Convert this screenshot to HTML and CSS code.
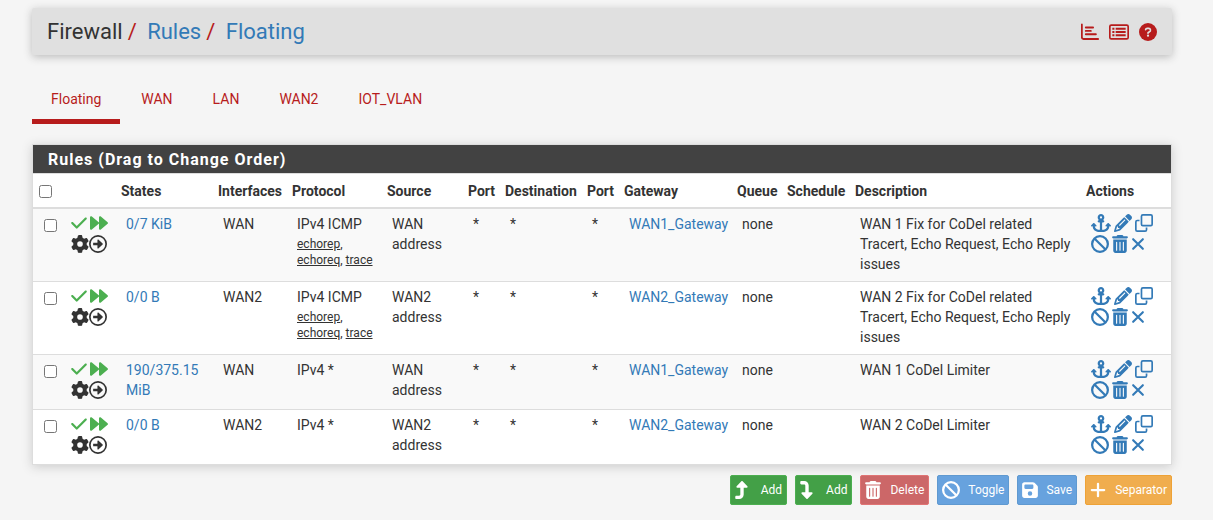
FILE: index.html
```
<!DOCTYPE html>
<html lang="en">
<head>
  <meta charset="utf-8">
  <title>Firewall: Rules: Floating</title>
  <link rel="stylesheet" href="styles.css">
</head>
<body>
  <!-- Icon set -->
  <svg class="icon-set" aria-hidden="true">
    <symbol id="check" viewBox="0 0 448 512"><path d="M438.6 105.4c12.5 12.5 12.5 32.8 0 45.3l-256 256c-12.5 12.5-32.8 12.5-45.3 0l-128-128c-12.5-12.5-12.5-32.8 0-45.3s32.8-12.5 45.3 0L160 338.7 393.4 105.4c12.5-12.5 32.8-12.5 45.3 0z"/></symbol>
    <symbol id="forward" viewBox="0 0 512 512"><path d="M52.5 440.6c-9.5 7.9-22.8 9.7-34.1 4.4S0 428.4 0 416V96C0 83.6 7.2 72.3 18.4 67s24.5-3.6 34.1 4.4L256 241V96c0-12.4 7.2-23.7 18.4-29s24.5-3.6 34.1 4.4l192 160c7.3 6.1 11.5 15.1 11.5 24.6s-4.2 18.5-11.5 24.6l-192 160c-9.5 7.9-22.8 9.7-34.1 4.4s-18.4-16.6-18.4-29V271L52.5 440.6z"/></symbol>
    <symbol id="gear" viewBox="0 0 512 512"><path d="M495.9 166.6c3.2 8.7 .5 18.4-6.4 24.6l-43.3 39.4c1.1 8.3 1.7 16.8 1.7 25.4s-.6 17.1-1.7 25.4l43.3 39.4c6.9 6.2 9.6 15.9 6.4 24.6c-4.4 11.9-9.7 23.3-15.8 34.3l-4.7 8.1c-6.6 11-14 21.4-22.1 31.2c-5.9 7.2-15.7 9.6-24.5 6.8l-55.7-17.7c-13.4 10.3-28.2 18.9-44 25.4l-12.5 57.1c-2 9.1-9 16.3-18.2 17.8c-13.8 2.3-28 3.5-42.5 3.5s-28.7-1.2-42.5-3.5c-9.2-1.5-16.2-8.7-18.2-17.8l-12.5-57.1c-15.8-6.5-30.6-15.1-44-25.4L83.1 425.9c-8.8 2.8-18.6 .3-24.5-6.8c-8.1-9.8-15.5-20.2-22.1-31.2l-4.7-8.1c-6.1-11-11.4-22.4-15.8-34.3c-3.2-8.7-.5-18.4 6.4-24.6l43.3-39.4C64.6 273.1 64 264.6 64 256s.6-17.1 1.7-25.4L22.4 191.2c-6.9-6.2-9.6-15.9-6.4-24.6c4.4-11.9 9.7-23.3 15.8-34.3l4.7-8.1c6.6-11 14-21.4 22.1-31.2c5.9-7.2 15.7-9.6 24.5-6.8l55.7 17.7c13.4-10.3 28.2-18.9 44-25.4l12.5-57.1c2-9.1 9-16.3 18.2-17.8C227.3 1.2 241.5 0 256 0s28.7 1.2 42.5 3.5c9.2 1.5 16.2 8.7 18.2 17.8l12.5 57.1c15.8 6.5 30.6 15.1 44 25.4l55.7-17.7c8.8-2.8 18.6-.3 24.5 6.8c8.1 9.8 15.5 20.2 22.1 31.2l4.7 8.1c6.1 11 11.4 22.4 15.8 34.3zM256 336a80 80 0 1 0 0-160 80 80 0 1 0 0 160z"/></symbol>
    <symbol id="circle-right" viewBox="0 0 512 512"><circle cx="256" cy="256" r="232" fill="none" stroke="currentColor" stroke-width="48"/><path d="M118 222h122v-82c0-14 16-20 26-10l122 112c8 8 8 20 0 28L266 382c-10 10-26 4-26-10v-82H118z"/></symbol>
    <symbol id="anchor" viewBox="0 0 576 512"><path d="M320 96a32 32 0 1 1 -64 0 32 32 0 1 1 64 0zm21.1 80C367 158.8 384 129.4 384 96c0-53-43-96-96-96s-96 43-96 96c0 33.4 17 62.8 42.9 80H224c-17.7 0-32 14.3-32 32s14.3 32 32 32h32V448H208c-53 0-96-43-96-96v-6.1l7 7c9.4 9.4 24.6 9.4 33.9 0s9.4-24.6 0-33.9L97 263c-9.4-9.4-24.6-9.4-33.9 0L7 319c-9.4 9.4-9.4 24.6 0 33.9s24.6 9.4 33.9 0l7-7V352c0 88.4 71.6 160 160 160h160c88.4 0 160-71.6 160-160v-6.1l7 7c9.4 9.4 24.6 9.4 33.9 0s9.4-24.6 0-33.9l-56-56c-9.4-9.4-24.6-9.4-33.9 0l-56 56c-9.4 9.4-9.4 24.6 0 33.9s24.6 9.4 33.9 0l7-7V352c0 53-43 96-96 96H320V240h32c17.7 0 32-14.3 32-32s-14.3-32-32-32H341.1z"/></symbol>
    <symbol id="pencil" viewBox="0 0 512 512"><path d="M410.3 231l11.3-11.3-33.9-33.9-62.1-62.1L291.7 89.8l-11.3 11.3-22.6 22.6L58.6 322.9c-10.4 10.4-18 23.3-22.2 37.4L1 480.7c-2.5 8.4-.2 17.5 6.1 23.7s15.3 8.5 23.7 6.1l120.3-35.4c14.1-4.2 27-11.8 37.4-22.2L387.7 253.7 410.3 231zM160 399.4l-9.1 22.7c-4 3.1-8.5 5.4-13.3 6.9L59.4 452l23-78.1c1.4-4.9 3.8-9.4 6.9-13.3l22.7-9.1v32c0 8.8 7.2 16 16 16h32zM362.7 18.7L348.3 33.2 325.7 55.8 314.3 67.1l33.9 33.9 62.1 62.1 33.9 33.9 11.3-11.3 22.6-22.6 14.5-14.5c25-25 25-65.5 0-90.5L453.3 18.7c-25-25-65.5-25-90.5 0zm-47.4 168l-144 144c-6.2 6.2-16.4 6.2-22.6 0s-6.2-16.4 0-22.6l144-144c6.2-6.2 16.4-6.2 22.6 0s6.2 16.4 0 22.6z"/></symbol>
    <symbol id="clone" viewBox="0 0 512 512"><g fill="none" stroke="currentColor" stroke-width="48"><rect x="184" y="24" width="304" height="304" rx="40"/><path d="M128 184H64c-22 0-40 18-40 40v224c0 22 18 40 40 40h224c22 0 40-18 40-40v-64"/></g></symbol>
    <symbol id="ban" viewBox="0 0 512 512"><g fill="none" stroke="currentColor" stroke-width="64"><circle cx="256" cy="256" r="224"/><path d="M98 98l316 316"/></g></symbol>
    <symbol id="trash" viewBox="0 0 448 512"><path d="M135.2 17.7L128 32H32C14.3 32 0 46.3 0 64S14.3 96 32 96H416c17.7 0 32-14.3 32-32s-14.3-32-32-32H320l-7.2-14.3C307.4 6.8 296.3 0 284.2 0H163.8c-12.1 0-23.2 6.8-28.6 17.7zM416 128H32V448c0 35.3 28.7 64 64 64H352c35.3 0 64-28.7 64-64V128zM144 208V432c0 8.8-7.2 16-16 16s-16-7.2-16-16V208c0-8.8 7.2-16 16-16s16 7.2 16 16zm96 0V432c0 8.8-7.2 16-16 16s-16-7.2-16-16V208c0-8.8 7.2-16 16-16s16 7.2 16 16zm96 0V432c0 8.8-7.2 16-16 16s-16-7.2-16-16V208c0-8.8 7.2-16 16-16s16 7.2 16 16z"/></symbol>
    <symbol id="xmark" viewBox="0 0 384 512"><path d="M54 118l276 276M330 118L54 394" fill="none" stroke="currentColor" stroke-width="60" stroke-linecap="round"/></symbol>
    <symbol id="turn-up" viewBox="0 0 384 512"><path d="M350 177.5c3.8-8.8 2-19-4.6-26l-136-144C204.9 2.7 198.6 0 192 0s-12.9 2.7-17.4 7.5l-136 144c-6.6 7-8.4 17.2-4.6 26s12.5 14.5 22 14.5h88v192c0 17.7-14.3 32-32 32H32c-17.7 0-32 14.3-32 32v32c0 17.7 14.3 32 32 32h80c70.7 0 128-57.3 128-128V192h88c9.6 0 18.2-5.7 22-14.5z"/></symbol>
    <symbol id="turn-down" viewBox="0 0 384 512"><path d="M350 334.5c3.8 8.8 2 19-4.6 26l-136 144c-4.5 4.8-10.8 7.5-17.4 7.5s-12.9-2.7-17.4-7.5l-136-144c-6.6-7-8.4-17.2-4.6-26s12.5-14.5 22-14.5h88V128c0-17.7-14.3-32-32-32H32C14.3 96 0 81.7 0 64V32C0 14.3 14.3 0 32 0h80c70.7 0 128 57.3 128 128v192h88c9.6 0 18.2 5.7 22 14.5z"/></symbol>
    <symbol id="save" viewBox="0 0 448 512"><path fill-rule="evenodd" d="M64 32C28.7 32 0 60.7 0 96v320c0 35.3 28.7 64 64 64h320c35.3 0 64-28.7 64-64V173c0-17-6.7-33-18.7-45L352 50.7C340 38.7 324 32 307 32zM64 128c0-17.7 14.3-32 32-32h192c17.7 0 32 14.3 32 32v64c0 17.7-14.3 32-32 32H96c-17.7 0-32-14.3-32-32zM224 288a64 64 0 1 1 0 128 64 64 0 1 1 0-128z"/></symbol>
    <symbol id="plus" viewBox="0 0 448 512"><path d="M224 80v352M48 256h352" fill="none" stroke="currentColor" stroke-width="64" stroke-linecap="round"/></symbol>
    <symbol id="chart" viewBox="0 0 512 512"><path d="M24 40v368c0 26 20 46 46 46h418M136 128h208M136 224h144M136 320h288" fill="none" stroke="currentColor" stroke-width="52" stroke-linecap="round"/></symbol>
    <symbol id="list" viewBox="0 0 576 512"><rect x="24" y="56" width="528" height="400" rx="42" fill="none" stroke="currentColor" stroke-width="48"/><path d="M96 132h60v56H96zM192 132h288v56H192zM96 228h60v56H96zM192 228h288v56H192zM96 324h60v56H96zM192 324h288v56H192z"/></symbol>
    <symbol id="help" viewBox="0 0 512 512"><circle cx="256" cy="256" r="256"/><path d="M188 188c4-30 20-36 46-36h42c60 0 66 76 22 98l-42 26v18" fill="none" stroke="#e0e0e0" stroke-width="46" stroke-linecap="round" stroke-linejoin="round"/><circle cx="256" cy="362" r="32" fill="#e0e0e0"/></symbol>
  </svg>

  <header class="header">
    <ol class="breadcrumb">
      <li>Firewall</li>
      <li><a href="#">Rules</a></li>
      <li><a href="#">Floating</a></li>
    </ol>
    <nav class="context-links">
      <a href="#" title="Status"><svg class="icon"><use href="#chart"/></svg></a>
      <a href="#" title="Logs"><svg class="icon icon-wide"><use href="#list"/></svg></a>
      <a href="#" title="Help"><svg class="icon"><use href="#help"/></svg></a>
    </nav>
  </header>

  <nav class="tabs">
    <a href="#" class="active">Floating</a>
    <a href="#">WAN</a>
    <a href="#">LAN</a>
    <a href="#">WAN2</a>
    <a href="#">IOT_VLAN</a>
  </nav>

  <form>
    <section class="panel">
      <h2>Rules (Drag to Change Order)</h2>
      <table>
        <colgroup>
          <col class="col-check">
          <col class="col-icons">
          <col class="col-states">
          <col class="col-interfaces">
          <col class="col-protocol">
          <col class="col-source">
          <col class="col-port">
          <col class="col-destination">
          <col class="col-port">
          <col class="col-gateway">
          <col class="col-queue">
          <col class="col-schedule">
          <col class="col-description">
          <col class="col-actions">
        </colgroup>
        <thead>
          <tr>
            <th><input type="checkbox" aria-label="Select all"></th>
            <th></th>
            <th>States</th>
            <th>Interfaces</th>
            <th>Protocol</th>
            <th>Source</th>
            <th>Port</th>
            <th>Destination</th>
            <th>Port</th>
            <th>Gateway</th>
            <th>Queue</th>
            <th>Schedule</th>
            <th>Description</th>
            <th>Actions</th>
          </tr>
        </thead>
        <tbody>
          <tr>
            <td><input type="checkbox" aria-label="Select rule 1"></td>
            <td>
              <div class="icon-row pass"><svg class="icon icon-narrow"><use href="#check"/></svg><svg class="icon"><use href="#forward"/></svg></div>
              <div class="icon-row"><svg class="icon"><use href="#gear"/></svg><svg class="icon"><use href="#circle-right"/></svg></div>
            </td>
            <td><a href="#">0/7 KiB</a></td>
            <td>WAN</td>
            <td>IPv4 ICMP <div class="icmp"><u>echorep</u>, <u>echoreq</u>, <u>trace</u></div></td>
            <td>WAN address</td>
            <td>*</td>
            <td>*</td>
            <td>*</td>
            <td><a href="#">WAN1_Gateway</a></td>
            <td>none</td>
            <td></td>
            <td>WAN 1 Fix for CoDel related Tracert, Echo Request, Echo Reply issues</td>
            <td>
              <div class="icon-row actions"><a href="#" title="Move"><svg class="icon icon-wide"><use href="#anchor"/></svg></a><a href="#" title="Edit"><svg class="icon"><use href="#pencil"/></svg></a><a href="#" title="Copy"><svg class="icon"><use href="#clone"/></svg></a></div>
              <div class="icon-row actions"><a href="#" title="Disable"><svg class="icon"><use href="#ban"/></svg></a><a href="#" title="Delete"><svg class="icon icon-narrow"><use href="#trash"/></svg></a><a href="#" title="Kill states"><svg class="icon icon-slim"><use href="#xmark"/></svg></a></div>
            </td>
          </tr>
          <tr>
            <td><input type="checkbox" aria-label="Select rule 2"></td>
            <td>
              <div class="icon-row pass"><svg class="icon icon-narrow"><use href="#check"/></svg><svg class="icon"><use href="#forward"/></svg></div>
              <div class="icon-row"><svg class="icon"><use href="#gear"/></svg><svg class="icon"><use href="#circle-right"/></svg></div>
            </td>
            <td><a href="#">0/0 B</a></td>
            <td>WAN2</td>
            <td>IPv4 ICMP <div class="icmp"><u>echorep</u>, <u>echoreq</u>, <u>trace</u></div></td>
            <td>WAN2 address</td>
            <td>*</td>
            <td>*</td>
            <td>*</td>
            <td><a href="#">WAN2_Gateway</a></td>
            <td>none</td>
            <td></td>
            <td>WAN 2 Fix for CoDel related Tracert, Echo Request, Echo Reply issues</td>
            <td>
              <div class="icon-row actions"><a href="#" title="Move"><svg class="icon icon-wide"><use href="#anchor"/></svg></a><a href="#" title="Edit"><svg class="icon"><use href="#pencil"/></svg></a><a href="#" title="Copy"><svg class="icon"><use href="#clone"/></svg></a></div>
              <div class="icon-row actions"><a href="#" title="Disable"><svg class="icon"><use href="#ban"/></svg></a><a href="#" title="Delete"><svg class="icon icon-narrow"><use href="#trash"/></svg></a><a href="#" title="Kill states"><svg class="icon icon-slim"><use href="#xmark"/></svg></a></div>
            </td>
          </tr>
          <tr>
            <td><input type="checkbox" aria-label="Select rule 3"></td>
            <td>
              <div class="icon-row pass"><svg class="icon icon-narrow"><use href="#check"/></svg><svg class="icon"><use href="#forward"/></svg></div>
              <div class="icon-row"><svg class="icon"><use href="#gear"/></svg><svg class="icon"><use href="#circle-right"/></svg></div>
            </td>
            <td><a href="#">190/375.15 MiB</a></td>
            <td>WAN</td>
            <td>IPv4 *</td>
            <td>WAN address</td>
            <td>*</td>
            <td>*</td>
            <td>*</td>
            <td><a href="#">WAN1_Gateway</a></td>
            <td>none</td>
            <td></td>
            <td>WAN 1 CoDel Limiter</td>
            <td>
              <div class="icon-row actions"><a href="#" title="Move"><svg class="icon icon-wide"><use href="#anchor"/></svg></a><a href="#" title="Edit"><svg class="icon"><use href="#pencil"/></svg></a><a href="#" title="Copy"><svg class="icon"><use href="#clone"/></svg></a></div>
              <div class="icon-row actions"><a href="#" title="Disable"><svg class="icon"><use href="#ban"/></svg></a><a href="#" title="Delete"><svg class="icon icon-narrow"><use href="#trash"/></svg></a><a href="#" title="Kill states"><svg class="icon icon-slim"><use href="#xmark"/></svg></a></div>
            </td>
          </tr>
          <tr>
            <td><input type="checkbox" aria-label="Select rule 4"></td>
            <td>
              <div class="icon-row pass"><svg class="icon icon-narrow"><use href="#check"/></svg><svg class="icon"><use href="#forward"/></svg></div>
              <div class="icon-row"><svg class="icon"><use href="#gear"/></svg><svg class="icon"><use href="#circle-right"/></svg></div>
            </td>
            <td><a href="#">0/0 B</a></td>
            <td>WAN2</td>
            <td>IPv4 *</td>
            <td>WAN2 address</td>
            <td>*</td>
            <td>*</td>
            <td>*</td>
            <td><a href="#">WAN2_Gateway</a></td>
            <td>none</td>
            <td></td>
            <td>WAN 2 CoDel Limiter</td>
            <td>
              <div class="icon-row actions"><a href="#" title="Move"><svg class="icon icon-wide"><use href="#anchor"/></svg></a><a href="#" title="Edit"><svg class="icon"><use href="#pencil"/></svg></a><a href="#" title="Copy"><svg class="icon"><use href="#clone"/></svg></a></div>
              <div class="icon-row actions"><a href="#" title="Disable"><svg class="icon"><use href="#ban"/></svg></a><a href="#" title="Delete"><svg class="icon icon-narrow"><use href="#trash"/></svg></a><a href="#" title="Kill states"><svg class="icon icon-slim"><use href="#xmark"/></svg></a></div>
            </td>
          </tr>
        </tbody>
      </table>
    </section>

    <div class="buttons">
      <button type="button" class="btn btn-add"><svg class="icon icon-slim"><use href="#turn-up"/></svg>Add</button>
      <button type="button" class="btn btn-add"><svg class="icon icon-slim"><use href="#turn-down"/></svg>Add</button>
      <button type="button" class="btn btn-delete"><svg class="icon icon-narrow"><use href="#trash"/></svg>Delete</button>
      <button type="button" class="btn btn-blue"><svg class="icon"><use href="#ban"/></svg>Toggle</button>
      <button type="submit" class="btn btn-blue"><svg class="icon icon-narrow"><use href="#save"/></svg>Save</button>
      <button type="button" class="btn btn-separator"><svg class="icon icon-narrow"><use href="#plus"/></svg>Separator</button>
    </div>
  </form>
</body>
</html>
```
FILE: styles.css
```
* {
  box-sizing: border-box;
}
body {
  margin: 0;
  padding: 8px 41px 15px 32px;
  background-color: #f5f5f5;
  color: #333;
  font-family: Roboto, "Liberation Sans", sans-serif;
  font-size: 14px;
  line-height: 20px;
}
a {
  color: #337ab7;
  text-decoration: none;
}
input[type="checkbox"] {
  display: block;
  width: 13px;
  height: 13px;
  margin: 0 0 0 1px;
}

/* Icons */
.icon-set {
  display: none;
}
.icon {
  display: block;
  width: 18px;
  height: 18px;
  fill: currentColor;
}
.icon-wide {
  width: 20px;
}
.icon-narrow {
  width: 16px;
}
.icon-slim {
  width: 14px;
}

/* Page header */
.header {
  display: flex;
  align-items: center;
  justify-content: space-between;
  padding: 8px 15px;
  background-color: #e0e0e0;
  border-radius: 2px;
  box-shadow: 0 2px 8px #bbb;
}
.breadcrumb {
  display: flex;
  margin: 0;
  padding: 0;
  list-style: none;
  font-size: 22px;
  line-height: 31px;
}
.breadcrumb li + li:before {
  content: "/\00a0";
  padding: 0 5px;
  color: #b71c1c;
}
.context-links {
  display: flex;
  gap: 10px;
}
.context-links a {
  color: #b71c1c;
}

/* Tabs */
.tabs {
  display: flex;
  gap: 2px;
  margin: 20px 0;
}
.tabs a {
  padding: 14px 19px 10px;
  border-bottom: 5px solid transparent;
  color: #b71c1c;
}
.tabs .active {
  border-color: #b71c1c;
}

/* Rules table */
.panel {
  background-color: #fff;
  border: 1px solid #ddd;
  box-shadow: 0 2px 10px #ccc;
}
.panel h2 {
  margin: 0;
  padding: 5px 15px 3px;
  background-color: #424242;
  color: #fff;
  font-size: 16px;
  font-weight: bold;
  letter-spacing: 1px;
}
table {
  width: 100%;
  table-layout: fixed;
  border-collapse: separate;
  border-spacing: 0;
}
.col-check { width: 28px; }
.col-icons { width: 55px; }
.col-states { width: 97px; }
.col-interfaces { width: 74px; }
.col-protocol { width: 95px; }
.col-source { width: 81px; }
.col-port { width: 37px; }
.col-destination { width: 82px; }
.col-gateway { width: 113px; }
.col-queue { width: 50px; }
.col-schedule { width: 68px; }
.col-actions { width: 90px; }
th {
  padding: 7px 0 6px 5px;
  border-top: 1px solid #ddd;
  border-bottom: 2px solid #ddd;
  text-align: left;
}
td {
  padding: 5px 0 7px 10px;
  border-bottom: 1px solid #ddd;
  vertical-align: top;
}
tbody tr:nth-child(odd) {
  background-color: #f9f9f9;
}
tbody tr:last-child td {
  border-bottom: none;
}
td input[type="checkbox"] {
  margin-top: 5px;
}
td:nth-child(13) {
  padding-right: 10px;
}
.icmp {
  padding: 2px 0;
  font-size: 12px;
  line-height: 16px;
}
.icon-row {
  display: flex;
  height: 21px;
}
.pass {
  gap: 3px;
  color: #4caf50;
}
.actions {
  gap: 3px;
}

/* Bottom buttons */
.buttons {
  display: flex;
  justify-content: flex-end;
  gap: 8px;
  margin-top: 10px;
}
.btn {
  display: flex;
  align-items: center;
  gap: 9px;
  height: 30px;
  padding: 0 4px;
  border: 1px solid;
  border-radius: 2px;
  color: #fff;
  font-family: inherit;
  font-size: 12px;
  cursor: pointer;
}
.btn-add {
  gap: 12px;
  background-color: #43a047;
  border-color: #4caf50;
}
.btn-delete {
  background-color: #cc6768;
  border-color: #e07474;
}
.btn-blue {
  gap: 8px;
  background-color: #67a2de;
  border-color: #5f99d0;
}
.btn-separator {
  background-color: #f0ad4e;
  border-color: #eea236;
}
```
